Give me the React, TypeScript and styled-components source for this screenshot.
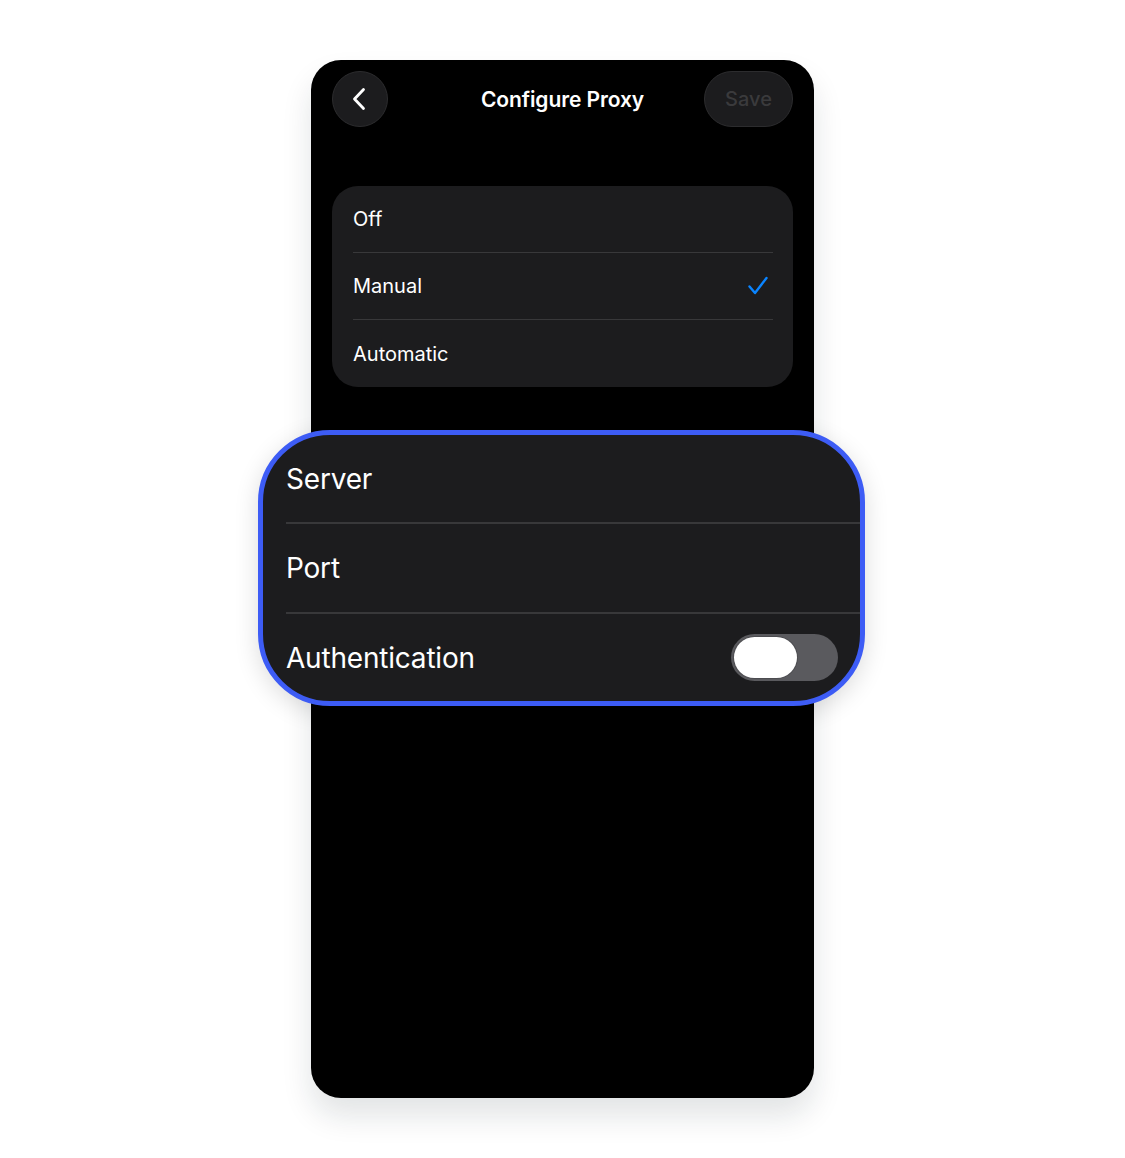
import React, { useState } from 'react';
import styled, { createGlobalStyle } from 'styled-components';

const GlobalStyle = createGlobalStyle`
  html, body {
    margin: 0;
    padding: 0;
    background: #ffffff;
    font-family: Inter, 'Noto Sans', sans-serif;
    -webkit-font-smoothing: antialiased;
  }
`;

const Page = styled.div`
  width: 1125px;
  height: 1158px;
  display: flex;
  justify-content: center;
  padding-top: 60px;
  box-sizing: border-box;
`;

const Phone = styled.div`
  width: 503px;
  height: 1038px;
  background: #000;
  border-radius: 30px;
  box-shadow: 0 18px 30px rgba(20, 30, 40, 0.12);
  display: flex;
  flex-direction: column;
  padding: 11px 21px 0;
  box-sizing: border-box;
`;

const Header = styled.div`
  display: grid;
  grid-template-columns: 1fr auto 1fr;
  align-items: center;
  height: 56px;
`;

const RoundButton = styled.button<{ $wide?: boolean }>`
  justify-self: ${p => (p.$wide ? 'end' : 'start')};
  width: ${p => (p.$wide ? '89px' : '56px')};
  height: 56px;
  border-radius: 28px;
  background: #1c1c1e;
  border: 1px solid #2c2c2e;
  display: flex;
  align-items: center;
  justify-content: center;
  padding: 0;
  color: #3a3a3c;
  font-family: Inter, sans-serif;
  font-size: 20px;
  font-weight: 500;
  cursor: pointer;
`;

const Title = styled.div`
  color: #fff;
  font-size: 21px;
  font-weight: 600;
  letter-spacing: -0.1px;
`;

const Group = styled.div`
  margin-top: 59px;
  background: #1c1c1e;
  border-radius: 26px;
  padding-left: 21px;
`;

const OptionRow = styled.div<{ $last?: boolean }>`
  height: 67px;
  display: flex;
  align-items: center;
  justify-content: space-between;
  color: #fff;
  font-size: 20px;
  margin-right: 20px;
  padding-right: 4px;
  border-bottom: ${p => (p.$last ? 'none' : '1px solid #38383a')};
  box-sizing: border-box;
  cursor: pointer;
`;

// enlarged callout of the fields section, wider than the phone itself
const Zoomed = styled.div`
  margin: 43px -72px 0 -74px;
  border: 5px solid #3d5cf5;
  border-radius: 72px;
  background: #1c1c1e;
  padding-left: 23px;
  box-shadow: 0 6px 24px rgba(0, 0, 0, 0.14);
  overflow: hidden;
`;

const FieldRow = styled.div<{ $h: number; $last?: boolean }>`
  height: ${p => p.$h}px;
  display: flex;
  align-items: center;
  justify-content: space-between;
  padding-right: 22px;
  color: #fff;
  font-size: 28px;
  letter-spacing: -0.2px;
  border-bottom: ${p => (p.$last ? 'none' : '2px solid #38383a')};
  box-sizing: border-box;
`;

const Track = styled.div<{ $on: boolean }>`
  width: 107px;
  height: 47px;
  border-radius: 24px;
  background: ${p => (p.$on ? '#30d158' : '#5a5a5e')};
  padding: 3px;
  box-sizing: border-box;
  display: flex;
  justify-content: ${p => (p.$on ? 'flex-end' : 'flex-start')};
  cursor: pointer;
`;

const Knob = styled.div`
  width: 63px;
  height: 41px;
  border-radius: 21px;
  background: #fff;
  box-shadow: 0 0 0 1px rgba(0, 0, 0, 0.15);
`;

const ChevronLeft = () => (
  <svg width="28" height="28" viewBox="0 0 28 28" fill="none">
    <path d="M17.5 4.5 L8.5 14 L17.5 23.5" stroke="#fff" strokeWidth="2.8" strokeLinecap="round" strokeLinejoin="round" />
  </svg>
);

const Check = () => (
  <svg width="22" height="22" viewBox="0 0 22 22" fill="none">
    <path d="M2.5 11.5 L8 18 L19.5 3" stroke="#0a84ff" strokeWidth="2.4" strokeLinecap="round" strokeLinejoin="round" />
  </svg>
);

const modes = ['Off', 'Manual', 'Automatic'];

export default function App() {
  const [mode, setMode] = useState('Manual');
  const [auth, setAuth] = useState(false);

  return (
    <>
      <GlobalStyle />
      <Page>
        <Phone>
          <Header>
            <RoundButton aria-label="Back">
              <ChevronLeft />
            </RoundButton>
            <Title>Configure Proxy</Title>
            <RoundButton $wide disabled>Save</RoundButton>
          </Header>

          <Group>
            {modes.map((m, i) => (
              <OptionRow key={m} $last={i === modes.length - 1} onClick={() => setMode(m)}>
                {m}
                {mode === m && <Check />}
              </OptionRow>
            ))}
          </Group>

          <Zoomed>
            <FieldRow $h={89}>Server</FieldRow>
            <FieldRow $h={90}>Port</FieldRow>
            <FieldRow $h={87} $last>
              Authentication
              <Track $on={auth} onClick={() => setAuth(!auth)}>
                <Knob />
              </Track>
            </FieldRow>
          </Zoomed>
        </Phone>
      </Page>
    </>
  );
}
